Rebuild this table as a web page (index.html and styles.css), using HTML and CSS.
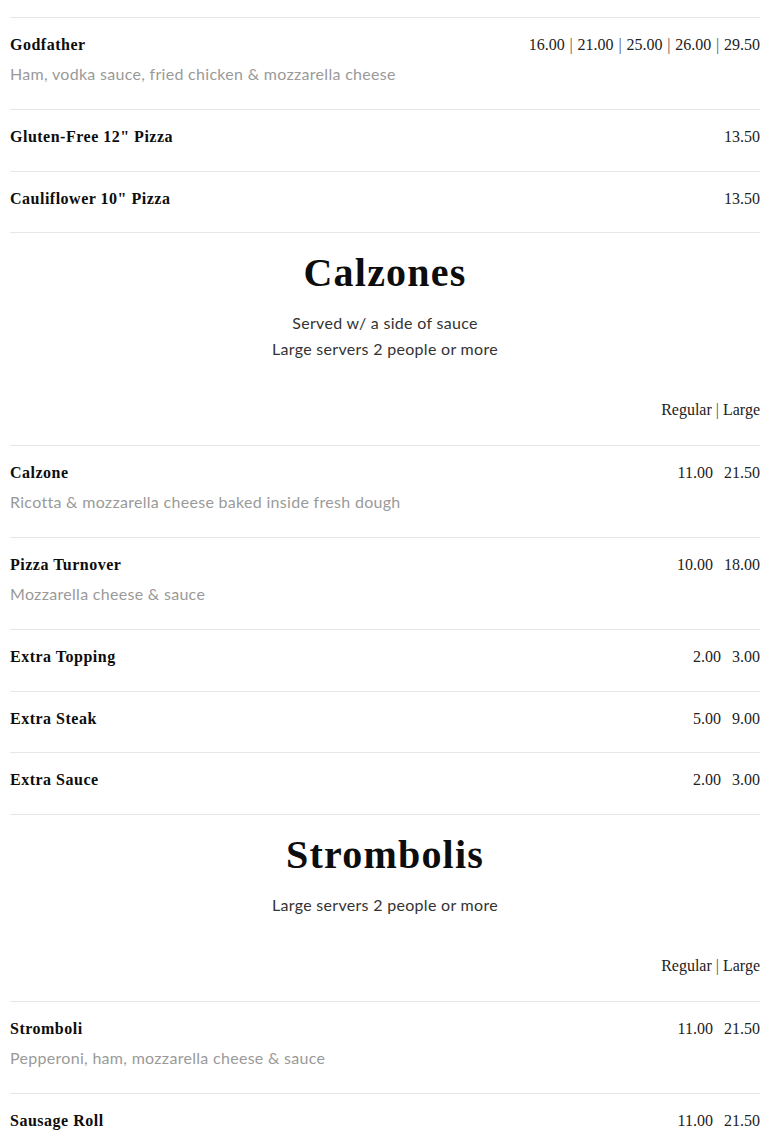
FILE: index.html
```html
<!DOCTYPE html>
<html lang="en">
<head>
<meta charset="utf-8">
<title>Menu</title>
<link rel="stylesheet" href="styles.css">
</head>
<body>
<main class="menu">
  <div class="item">
    <div class="item-head">
      <span class="item-name">Godfather</span>
      <span class="prices">16.00 <span class="sep">|</span> 21.00 <span class="sep">|</span> 25.00 <span class="sep">|</span> 26.00 <span class="sep">|</span> 29.50</span>
    </div>
    <p class="item-desc">Ham, vodka sauce, fried chicken &amp; mozzarella cheese</p>
  </div>
  <div class="item">
    <div class="item-head">
      <span class="item-name">Gluten-Free 12" Pizza</span>
      <span class="prices">13.50</span>
    </div>
  </div>
  <div class="item">
    <div class="item-head">
      <span class="item-name">Cauliflower 10" Pizza</span>
      <span class="prices">13.50</span>
    </div>
  </div>

  <section class="section-head">
    <h2 class="section-title">Calzones</h2>
    <p class="section-note">Served w/ a side of sauce</p>
    <p class="section-note">Large servers 2 people or more</p>
    <div class="size-labels">Regular <span class="sep">|</span> Large</div>
  </section>
  <div class="item">
    <div class="item-head">
      <span class="item-name">Calzone</span>
      <span class="prices"><span class="p">11.00</span><span class="p">21.50</span></span>
    </div>
    <p class="item-desc">Ricotta &amp; mozzarella cheese baked inside fresh dough</p>
  </div>
  <div class="item">
    <div class="item-head">
      <span class="item-name">Pizza Turnover</span>
      <span class="prices"><span class="p">10.00</span><span class="p">18.00</span></span>
    </div>
    <p class="item-desc">Mozzarella cheese &amp; sauce</p>
  </div>
  <div class="item">
    <div class="item-head">
      <span class="item-name">Extra Topping</span>
      <span class="prices"><span class="p">2.00</span><span class="p">3.00</span></span>
    </div>
  </div>
  <div class="item">
    <div class="item-head">
      <span class="item-name">Extra Steak</span>
      <span class="prices"><span class="p">5.00</span><span class="p">9.00</span></span>
    </div>
  </div>
  <div class="item">
    <div class="item-head">
      <span class="item-name">Extra Sauce</span>
      <span class="prices"><span class="p">2.00</span><span class="p">3.00</span></span>
    </div>
  </div>

  <section class="section-head">
    <h2 class="section-title">Strombolis</h2>
    <p class="section-note">Large servers 2 people or more</p>
    <div class="size-labels">Regular <span class="sep">|</span> Large</div>
  </section>
  <div class="item">
    <div class="item-head">
      <span class="item-name">Stromboli</span>
      <span class="prices"><span class="p">11.00</span><span class="p">21.50</span></span>
    </div>
    <p class="item-desc">Pepperoni, ham, mozzarella cheese &amp; sauce</p>
  </div>
  <div class="item">
    <div class="item-head">
      <span class="item-name">Sausage Roll</span>
      <span class="prices"><span class="p">11.00</span><span class="p">21.50</span></span>
    </div>
  </div>
</main>
</body>
</html>
```

FILE: styles.css
```css
* { box-sizing: border-box; }
html, body { margin: 0; padding: 0; background: #fff; }
body { font-family: "Liberation Serif", "DejaVu Serif", serif; color: #111; }
.menu { padding: 17px 10px 40px; }

.item {
  border-top: 1px solid #e6e6e6;
  padding: 16px 0 22.5px;
}
.item-head {
  display: flex;
  justify-content: space-between;
  align-items: center;
  line-height: 22px;
}
.item-name {
  font-weight: bold;
  font-size: 16px;
  letter-spacing: 0.5px;
  color: #0d0d0d;
}
.prices {
  font-size: 16px;
  color: #222;
  display: flex;
  white-space: pre;
}
.prices .p { margin-left: 11px; }
.prices .sep { margin: 0 0.8px; }
.sep { color: #555; }
.item-desc {
  margin: 7px 0 1.5px;
  font-family: Lato, "Open Sans", sans-serif;
  font-size: 16px;
  letter-spacing: 0.3px;
  line-height: 22px;
  color: #9a9a9a;
}

.section-head {
  border-top: 1px solid #e6e6e6;
  padding: 15px 0 24px;
  text-align: center;
}
.section-title {
  margin: 0 0 12px;
  font-size: 40px;
  line-height: 50px;
  font-weight: bold;
  letter-spacing: 1.2px;
  color: #0d0d0d;
}
.section-note {
  margin: 0;
  font-family: Lato, "Open Sans", sans-serif;
  font-size: 16px;
  letter-spacing: 0.3px;
  line-height: 26px;
  color: #333;
}
.size-labels {
  margin-top: 37px;
  text-align: right;
  font-size: 16px;
  line-height: 22px;
  color: #222;
}
```
